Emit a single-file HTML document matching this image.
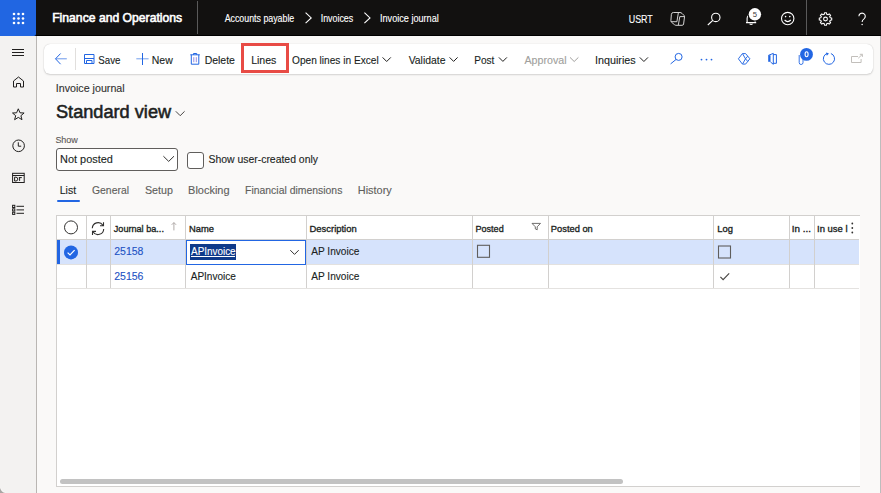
<!DOCTYPE html>
<html lang="en">
<head>
<meta charset="utf-8">
<title>Invoice journal -- Finance and Operations</title>
<style>
html,body{margin:0;padding:0}
body{width:881px;height:493px;overflow:hidden;position:relative;background:#faf9f8;font-family:"Liberation Sans",sans-serif;}
.a{position:absolute;box-sizing:border-box}
#hdr{left:0;top:0;width:881px;height:36px;background:#121110;border-bottom:1px solid #000}
#launcher{left:0;top:0;width:36px;height:36px;background:#2166e2;border-bottom-right-radius:2px}
#hsep1{left:197px;top:1px;width:1px;height:33px;background:#5a5a5a}
#hsep2{left:806px;top:0;width:1px;height:35px;background:#5a5a5a}
#nav{left:0;top:36px;width:37px;height:457px;background:#f3f2f1;border-right:1px solid #b9b6b3}
#rborder{left:880px;top:36px;width:1px;height:457px;background:#bdbdbd}
#card{left:44px;top:44px;width:829px;height:30px;background:#fff;border-radius:6px;box-shadow:0 0 1px rgba(0,0,0,.22),0 1px 2px rgba(0,0,0,.14)}
#tsep{left:75px;top:48px;width:1px;height:22px;background:#e1dfdd}
#redbox{left:241px;top:43px;width:48px;height:30px;border:3px solid #e84b45}
#dd{left:56px;top:148px;width:122px;height:23px;background:#fff;border:1px solid #605e5c;border-radius:3px}
#cb{left:187px;top:152px;width:17px;height:17px;background:#fff;border:1px solid #605e5c;border-radius:3px}
#tabul{left:57px;top:200px;width:23px;height:2px;background:#2266e3;border-radius:1px}
#grid{left:56px;top:215px;width:804px;height:272px;background:#fff;border:1px solid #d2d0ce;border-right:none}
#selrow{left:57px;top:240px;width:802px;height:24px;background:#d6e3fc}
#selbar{left:57px;top:240px;width:3px;height:24px;background:#2266e3}
#nameinput{left:186px;top:240px;width:120px;height:25px;background:#fff;border:1px solid #2266e3}
#hl{left:190px;top:244px;width:46px;height:16px;background:#0f3a8a}
#hlul{left:191px;top:256px;width:44px;height:1px;background:#fff}
#scroll{left:60px;top:479px;width:563px;height:5px;background:#c2c2c2;border-radius:3px}
svg.a{left:0;top:0}
</style>
</head>
<body>
<div class="a" id="hdr"></div>
<div class="a" id="launcher"></div>
<div class="a" id="hsep1"></div>
<div class="a" id="hsep2"></div>
<div class="a" id="nav"></div>
<div class="a" id="rborder"></div>
<div class="a" id="card"></div>
<div class="a" id="tsep"></div>
<div class="a" id="redbox"></div>
<div class="a" id="dd"></div>
<div class="a" id="cb"></div>
<div class="a" id="tabul"></div>
<div class="a" id="grid"></div>
<div class="a" id="selrow"></div>
<div class="a" id="selbar"></div>
<div class="a" id="nameinput"></div>
<div class="a" id="hl"></div>
<div class="a" id="scroll"></div>
<svg class="a" width="881" height="493" viewBox="0 0 881 493" font-family="Liberation Sans, sans-serif">
<!-- grid lines -->
<g fill="#d2d0ce">
<rect x="57" y="239" width="802" height="1"/>
<rect x="57" y="264" width="802" height="1" fill="#e3e1df"/>
<rect x="57" y="288" width="802" height="1" fill="#e4e2e0"/>
<rect x="86" y="216" width="1" height="72"/>
<rect x="110" y="216" width="1" height="72"/>
<rect x="185" y="216" width="1" height="72"/>
<rect x="306" y="216" width="1" height="72"/>
<rect x="472" y="216" width="1" height="72"/>
<rect x="548" y="216" width="1" height="72"/>
<rect x="713" y="216" width="1" height="72"/>
<rect x="789" y="216" width="1" height="72"/>
<rect x="814" y="216" width="1" height="72"/>
</g>
<rect x="186" y="264" width="120" height="1" fill="#2266e3"/>
<!-- launcher dots -->
<g fill="#fff">
<circle cx="14" cy="14" r="1.3"/><circle cx="18.5" cy="14" r="1.3"/><circle cx="23" cy="14" r="1.3"/>
<circle cx="14" cy="18.5" r="1.3"/><circle cx="18.5" cy="18.5" r="1.3"/><circle cx="23" cy="18.5" r="1.3"/>
<circle cx="14" cy="23" r="1.3"/><circle cx="18.5" cy="23" r="1.3"/><circle cx="23" cy="23" r="1.3"/>
</g>
<!-- breadcrumb chevrons -->
<g fill="none" stroke="#fff" stroke-width="1.1">
<path d="M305.6 12.6 L311.2 17.9 L305.6 23.2"/>
<path d="M364.4 12.6 L370 17.9 L364.4 23.2"/>
</g>
<!-- header icons -->
<g fill="none" stroke="#fff" stroke-width="1.1">
<!-- copilot -->
<path d="M673.4 12.5 H680 Q681 12.5 682 13.4 L684 15.4 Q684.6 16 684.5 17 L683.6 24 Q683.4 25.3 682.2 25.3 H676 Q675.2 25.3 674.5 24.7 L671.6 22.3 Q670.8 21.6 670.9 20.6 L671.4 14.3 Q671.6 12.5 673.4 12.5 Z M678.4 12.6 L676.9 21.7 H671 M684.4 16.6 H679.8 L678.3 25.2" stroke="#dcdcdc" stroke-linejoin="round" stroke-width="0.95"/>
<!-- search -->
<circle cx="715.8" cy="17.4" r="4.2"/>
<path d="M712.8 20.4 L707.8 25"/>
<!-- bell -->
<path d="M747.1 22.4 V18.5 a4 4 0 0 1 8 0 V22.4 M746 22.6 h10.2 M749.6 23.9 q1.5 1.1 3 0"/>
<!-- smiley -->
<circle cx="787.7" cy="18.6" r="6.2"/>
<path d="M784.6 20 q3.1 3.2 6.2 0"/>
<!-- gear -->
<circle cx="825.5" cy="19" r="1.9"/>
<path d="M824.32 14.24 L824.47 12.79 L826.53 12.79 L826.68 14.24 L828.03 14.80 L829.16 13.87 L830.63 15.34 L829.70 16.47 L830.26 17.82 L831.71 17.97 L831.71 20.03 L830.26 20.18 L829.70 21.53 L830.63 22.66 L829.16 24.13 L828.03 23.20 L826.68 23.76 L826.53 25.21 L824.47 25.21 L824.32 23.76 L822.97 23.20 L821.84 24.13 L820.37 22.66 L821.30 21.53 L820.74 20.18 L819.29 20.03 L819.29 17.97 L820.74 17.82 L821.30 16.47 L820.37 15.34 L821.84 13.87 L822.97 14.80 Z" stroke-linejoin="round"/>
<!-- help -->
<path d="M858.9 16.3 a3.2 3.2 0 1 1 5.1 2.6 c-1.2 0.8 -1.9 1.5 -1.9 3.2"/>
</g>
<g fill="#fff">
<circle cx="785.6" cy="16.6" r="0.8"/><circle cx="789.8" cy="16.6" r="0.8"/>
<circle cx="862.1" cy="24.5" r="0.75"/>
<circle cx="754.9" cy="14.3" r="7.3" fill="#121110"/><circle cx="754.9" cy="14.3" r="6.2"/>
</g>
<text x="752.8" y="17" font-size="8" fill="#3b3a39" textLength="4.3" lengthAdjust="spacingAndGlyphs">5</text>
<!-- nav icons -->
<g fill="none" stroke="#201f1e" stroke-width="1">
<path d="M12 49.5 h12 M12 52.5 h12 M12 55.5 h12"/>
<path d="M13.5 81 L18.5 77 L23.5 81 V87 H20.5 V83.5 H16.5 V87 H13.5 Z"/>
<path d="M18.3 108.8 L20 112.8 L24.1 113 L20.9 115.7 L22 119.7 L18.3 117.4 L14.6 119.7 L15.7 115.7 L12.5 113 L16.6 112.8 Z"/>
<circle cx="18.6" cy="145.8" r="5.8"/>
<path d="M18.3 142.3 V146.2 H21.2"/>
<rect x="12.6" y="173.3" width="11.6" height="9.2"/>
<path d="M12.6 175.5 h11.6"/>
<path d="M14.6 177.2 h1.3 a1.9 1.9 0 0 1 0 3.8 h-1.3 z M18.8 177.6 h3 M19.6 177.6 v3.3"/>
<rect x="12.6" y="205.3" width="2.2" height="2.2"/>
<rect x="12.6" y="208.8" width="2.2" height="2.2"/>
<rect x="12.6" y="212.2" width="2.2" height="2.2"/>
<path d="M16.5 206.3 h7.5 M16.5 209.9 h7.5 M16.5 213.3 h7.5"/>
</g>
<!-- toolbar icons -->
<g fill="none" stroke="#2266e3" stroke-width="1">
<path d="M66.8 58.8 H55.6" stroke-width="0.9" opacity="0.75"/><path d="M60.6 53.5 L55.5 58.8 L60.6 64.2"/>
<path d="M84.5 54.5 h9.5 v9 h-9.5 z M84.5 58.5 h9.5 M86.5 63.5 v-3 h5.5 v3"/>
<path d="M136.3 58.8 h12.3" stroke-width="0.9" opacity="0.7"/><path d="M142.5 53 v12"/>
<path d="M190.3 54.8 h9.5 M193.5 54.8 v-1.3 h3.2 v1.3 M191.3 54.8 v9.4 h7.5 v-9.4"/><path d="M193.8 57.2 v5 M196.3 57.2 v5" stroke="#8a7fe0" stroke-width="0.9"/>
</g>
<g fill="none" stroke="#201f1e" stroke-width="1">
<path d="M382.6 57.4 l4.1 4.1 l4.1 -4.1"/>
<path d="M449.6 57.4 l4 4 l4 -4"/>
<path d="M498.9 57.4 l4 4 l4 -4"/>
<path d="M639.8 57.4 l4.1 4.1 l4.1 -4.1"/>
</g>
<path d="M570 57.4 l4.2 4.1 l4.2 -4.1" fill="none" stroke="#a19f9d" stroke-width="1"/>
<g fill="none" stroke="#2266e3" stroke-width="1.1">
<circle cx="678.6" cy="56.9" r="3.5" stroke-width="1"/>
<path d="M676 59.5 L670.6 63.9" stroke-width="1"/>
<path d="M742.4 53.6 H745.6 L749.9 58.8 L745.6 64.1 H742.4 L738.4 58.8 Z M742.6 53.8 L745.5 58.8 L742.6 63.9 M747.7 56.2 L745.5 58.8 L747.7 61.4" stroke-width="0.95"/>
<path d="M768.5 55.3 L773.3 53.4 V64.3 L770.5 62 M773.3 54.6 H776.4 V63.3 H773.3" stroke-width="1"/>
<path d="M799.2 55 v7.6 a1.9 1.9 0 0 0 3.8 0 v-4" stroke-width="0.9"/>
<path d="M830.9 53.5 A5.6 5.6 0 1 1 827.3 53.4" stroke-width="1"/>
</g>
<rect x="768.2" y="55.2" width="2.3" height="6.6" fill="#2266e3"/>
<g fill="#2266e3">
<circle cx="701.5" cy="59.6" r="0.9"/><circle cx="706.5" cy="59.6" r="0.9"/><circle cx="711.5" cy="59.6" r="0.9"/>
<circle cx="806.5" cy="54.4" r="6.4"/>
</g>
<path d="M826 52.6 L829 53.5 L826.8 55.8 Z" fill="#2266e3"/>
<ellipse cx="806.6" cy="54.2" rx="1.5" ry="2.5" fill="none" stroke="#fff" stroke-width="1.1"/>
<path d="M851.5 56.5 h6.5 M851.5 56.5 v6 h9.6 v-3.5 M858.3 58.2 l4 -3.8 M859.8 54.3 h2.6 v2.6" fill="none" stroke="#c2bfbb" stroke-width="1"/>
<!-- title chevron -->
<path d="M175.8 111.3 l4.4 4.4 l4.4 -4.4" fill="none" stroke="#484644" stroke-width="1"/>
<!-- dropdown chevron -->
<path d="M163.4 156.2 L168.7 161.4 L174 156.2" fill="none" stroke="#323130" stroke-width="1"/>
<!-- grid header icons -->
<circle cx="71" cy="227.4" r="6.5" fill="none" stroke="#323130" stroke-width="1"/>
<g fill="none" stroke="#323130" stroke-width="1.1">
<path d="M92.3 228.3 A5.8 5.8 0 0 1 102.9 225.2 M103.5 222.3 V225.8 H100"/>
<path d="M103.7 228.9 A5.8 5.8 0 0 1 93.1 232 M92.5 234.9 V231.4 H96"/>
</g>
<path d="M173.9 222.6 v7.8 M171.7 224.8 l2.2 -2.2 l2.2 2.2" fill="none" stroke="#a8a19f" stroke-width="0.9"/>
<path d="M532 223.4 h8.5 l-3.3 3.4 v3 l-1.9 -0.9 v-2.1 z" fill="none" stroke="#605e5c" stroke-width="0.9"/>
<g fill="#323130">
<circle cx="852.3" cy="223.5" r="0.9"/><circle cx="852.3" cy="228" r="0.9"/><circle cx="852.3" cy="232.5" r="0.9"/>
</g>
<!-- row 1 -->
<circle cx="71" cy="252.4" r="7" fill="#2266e3"/>
<path d="M67.6 252.6 l2.4 2.4 l4.6 -4.8" fill="none" stroke="#fff" stroke-width="1.2"/>
<path d="M290.3 250.2 l4.2 4.2 l4.2 -4.2" fill="none" stroke="#323130" stroke-width="1"/>
<rect x="477.5" y="245.3" width="12" height="12" fill="none" stroke="#605e5c" stroke-width="1.1"/>
<rect x="718.5" y="246" width="12" height="12" fill="none" stroke="#605e5c" stroke-width="1.1"/>
<!-- row 2 check -->
<path d="M720.4 276.8 l2.7 2.8 l6.1 -6.3" fill="none" stroke="#484644" stroke-width="1.15"/>
<path d="M0 487 Q0.6 492.4 6 493 H0 Z" fill="#a8a6a4"/>
<path d="M0.5 487 Q1.1 491.9 6 492.5" fill="none" stroke="#ffffff" stroke-width="0.7" opacity="0.7"/>
<text x="52.20" y="22.10" font-size="12.60" fill="#ffffff" stroke="#ffffff" stroke-width="0.60" textLength="129.94" lengthAdjust="spacingAndGlyphs">Finance and Operations</text>
<text x="224.68" y="22.00" font-size="10.00" fill="#ffffff" stroke="#ffffff" stroke-width="0.12" textLength="69.61" lengthAdjust="spacingAndGlyphs">Accounts payable</text>
<text x="320.68" y="22.00" font-size="10.00" fill="#ffffff" stroke="#ffffff" stroke-width="0.12" textLength="32.54" lengthAdjust="spacingAndGlyphs">Invoices</text>
<text x="379.96" y="22.00" font-size="10.00" fill="#ffffff" stroke="#ffffff" stroke-width="0.12" textLength="58.85" lengthAdjust="spacingAndGlyphs">Invoice journal</text>
<text x="628.72" y="22.90" font-size="10.80" fill="#ffffff" stroke="#ffffff" stroke-width="0.12" textLength="24.09" lengthAdjust="spacingAndGlyphs">USRT</text>
<text x="98.26" y="64.00" font-size="11.00" fill="#201f1e" stroke="#201f1e" stroke-width="0.12" textLength="22.17" lengthAdjust="spacingAndGlyphs">Save</text>
<text x="151.74" y="64.00" font-size="11.00" fill="#201f1e" stroke="#201f1e" stroke-width="0.12" textLength="21.04" lengthAdjust="spacingAndGlyphs">New</text>
<text x="204.64" y="64.00" font-size="11.00" fill="#201f1e" stroke="#201f1e" stroke-width="0.12" textLength="30.33" lengthAdjust="spacingAndGlyphs">Delete</text>
<text x="251.13" y="64.00" font-size="11.00" fill="#201f1e" stroke="#201f1e" stroke-width="0.12" textLength="25.25" lengthAdjust="spacingAndGlyphs">Lines</text>
<text x="292.02" y="64.00" font-size="11.00" fill="#201f1e" stroke="#201f1e" stroke-width="0.12" textLength="86.66" lengthAdjust="spacingAndGlyphs">Open lines in Excel</text>
<text x="408.66" y="64.00" font-size="11.00" fill="#201f1e" stroke="#201f1e" stroke-width="0.12" textLength="36.80" lengthAdjust="spacingAndGlyphs">Validate</text>
<text x="474.17" y="64.00" font-size="11.00" fill="#201f1e" stroke="#201f1e" stroke-width="0.12" textLength="20.20" lengthAdjust="spacingAndGlyphs">Post</text>
<text x="524.48" y="64.00" font-size="11.00" fill="#a19f9d" stroke="#a19f9d" stroke-width="0.12" textLength="42.03" lengthAdjust="spacingAndGlyphs">Approval</text>
<text x="595.01" y="64.00" font-size="11.00" fill="#201f1e" stroke="#201f1e" stroke-width="0.12" textLength="40.68" lengthAdjust="spacingAndGlyphs">Inquiries</text>
<text x="55.81" y="92.00" font-size="10.50" fill="#323130" stroke="#323130" stroke-width="0.12" textLength="68.90" lengthAdjust="spacingAndGlyphs">Invoice journal</text>
<text x="55.97" y="117.60" font-size="18.00" fill="#201f1e" stroke="#201f1e" stroke-width="0.55" textLength="115.18" lengthAdjust="spacingAndGlyphs">Standard view</text>
<text x="55.39" y="142.90" font-size="9.60" fill="#5a5856" stroke="#5a5856" stroke-width="0.12" textLength="22.49" lengthAdjust="spacingAndGlyphs">Show</text>
<text x="60.00" y="163.10" font-size="11.00" fill="#201f1e" stroke="#201f1e" stroke-width="0.12" textLength="52.90" lengthAdjust="spacingAndGlyphs">Not posted</text>
<text x="208.43" y="163.40" font-size="11.00" fill="#201f1e" stroke="#201f1e" stroke-width="0.12" textLength="109.59" lengthAdjust="spacingAndGlyphs">Show user-created only</text>
<text x="59.73" y="194.00" font-size="10.80" fill="#201f1e" stroke="#201f1e" stroke-width="0.12" textLength="16.44" lengthAdjust="spacingAndGlyphs">List</text>
<text x="91.98" y="194.00" font-size="10.80" fill="#605e5c" stroke="#605e5c" stroke-width="0.12" textLength="37.02" lengthAdjust="spacingAndGlyphs">General</text>
<text x="144.91" y="194.00" font-size="10.80" fill="#605e5c" stroke="#605e5c" stroke-width="0.12" textLength="27.93" lengthAdjust="spacingAndGlyphs">Setup</text>
<text x="188.10" y="194.00" font-size="10.80" fill="#605e5c" stroke="#605e5c" stroke-width="0.12" textLength="41.40" lengthAdjust="spacingAndGlyphs">Blocking</text>
<text x="245.04" y="194.00" font-size="10.80" fill="#605e5c" stroke="#605e5c" stroke-width="0.12" textLength="97.33" lengthAdjust="spacingAndGlyphs">Financial dimensions</text>
<text x="357.81" y="194.00" font-size="10.80" fill="#605e5c" stroke="#605e5c" stroke-width="0.12" textLength="33.92" lengthAdjust="spacingAndGlyphs">History</text>
<text x="113.76" y="232.00" font-size="9.80" fill="#201f1e" stroke="#201f1e" stroke-width="0.34" textLength="50.17" lengthAdjust="spacingAndGlyphs">Journal ba...</text>
<text x="189.03" y="232.00" font-size="9.80" fill="#201f1e" stroke="#201f1e" stroke-width="0.34" textLength="24.98" lengthAdjust="spacingAndGlyphs">Name</text>
<text x="309.53" y="232.00" font-size="9.80" fill="#201f1e" stroke="#201f1e" stroke-width="0.34" textLength="47.19" lengthAdjust="spacingAndGlyphs">Description</text>
<text x="475.46" y="232.00" font-size="9.80" fill="#201f1e" stroke="#201f1e" stroke-width="0.34" textLength="28.23" lengthAdjust="spacingAndGlyphs">Posted</text>
<text x="550.84" y="232.00" font-size="9.80" fill="#201f1e" stroke="#201f1e" stroke-width="0.34" textLength="41.97" lengthAdjust="spacingAndGlyphs">Posted on</text>
<text x="717.23" y="232.00" font-size="9.80" fill="#201f1e" stroke="#201f1e" stroke-width="0.34" textLength="15.68" lengthAdjust="spacingAndGlyphs">Log</text>
<text x="791.79" y="232.00" font-size="9.80" fill="#201f1e" stroke="#201f1e" stroke-width="0.34" textLength="19.10" lengthAdjust="spacingAndGlyphs">In ...</text>
<text x="817.03" y="232.00" font-size="9.80" fill="#201f1e" stroke="#201f1e" stroke-width="0.34" textLength="30.51" lengthAdjust="spacingAndGlyphs">In use l</text>
<text x="114.27" y="254.70" font-size="10.90" fill="#1d52c4" stroke="#1d52c4" stroke-width="0.12" textLength="29.18" lengthAdjust="spacingAndGlyphs">25158</text>
<text x="191.08" y="254.70" font-size="10.90" fill="#ffffff" stroke="#ffffff" stroke-width="0.12" textLength="44.56" lengthAdjust="spacingAndGlyphs">APInvoice</text>
<text x="311.18" y="254.70" font-size="10.90" fill="#201f1e" stroke="#201f1e" stroke-width="0.12" textLength="48.27" lengthAdjust="spacingAndGlyphs">AP Invoice</text>
<text x="114.27" y="279.60" font-size="10.90" fill="#1d52c4" stroke="#1d52c4" stroke-width="0.12" textLength="29.19" lengthAdjust="spacingAndGlyphs">25156</text>
<text x="190.68" y="279.60" font-size="10.90" fill="#201f1e" stroke="#201f1e" stroke-width="0.12" textLength="45.27" lengthAdjust="spacingAndGlyphs">APInvoice</text>
<text x="311.18" y="279.60" font-size="10.90" fill="#201f1e" stroke="#201f1e" stroke-width="0.12" textLength="48.27" lengthAdjust="spacingAndGlyphs">AP Invoice</text>
</svg>
<div class="a" id="hlul"></div>
</body>
</html>
